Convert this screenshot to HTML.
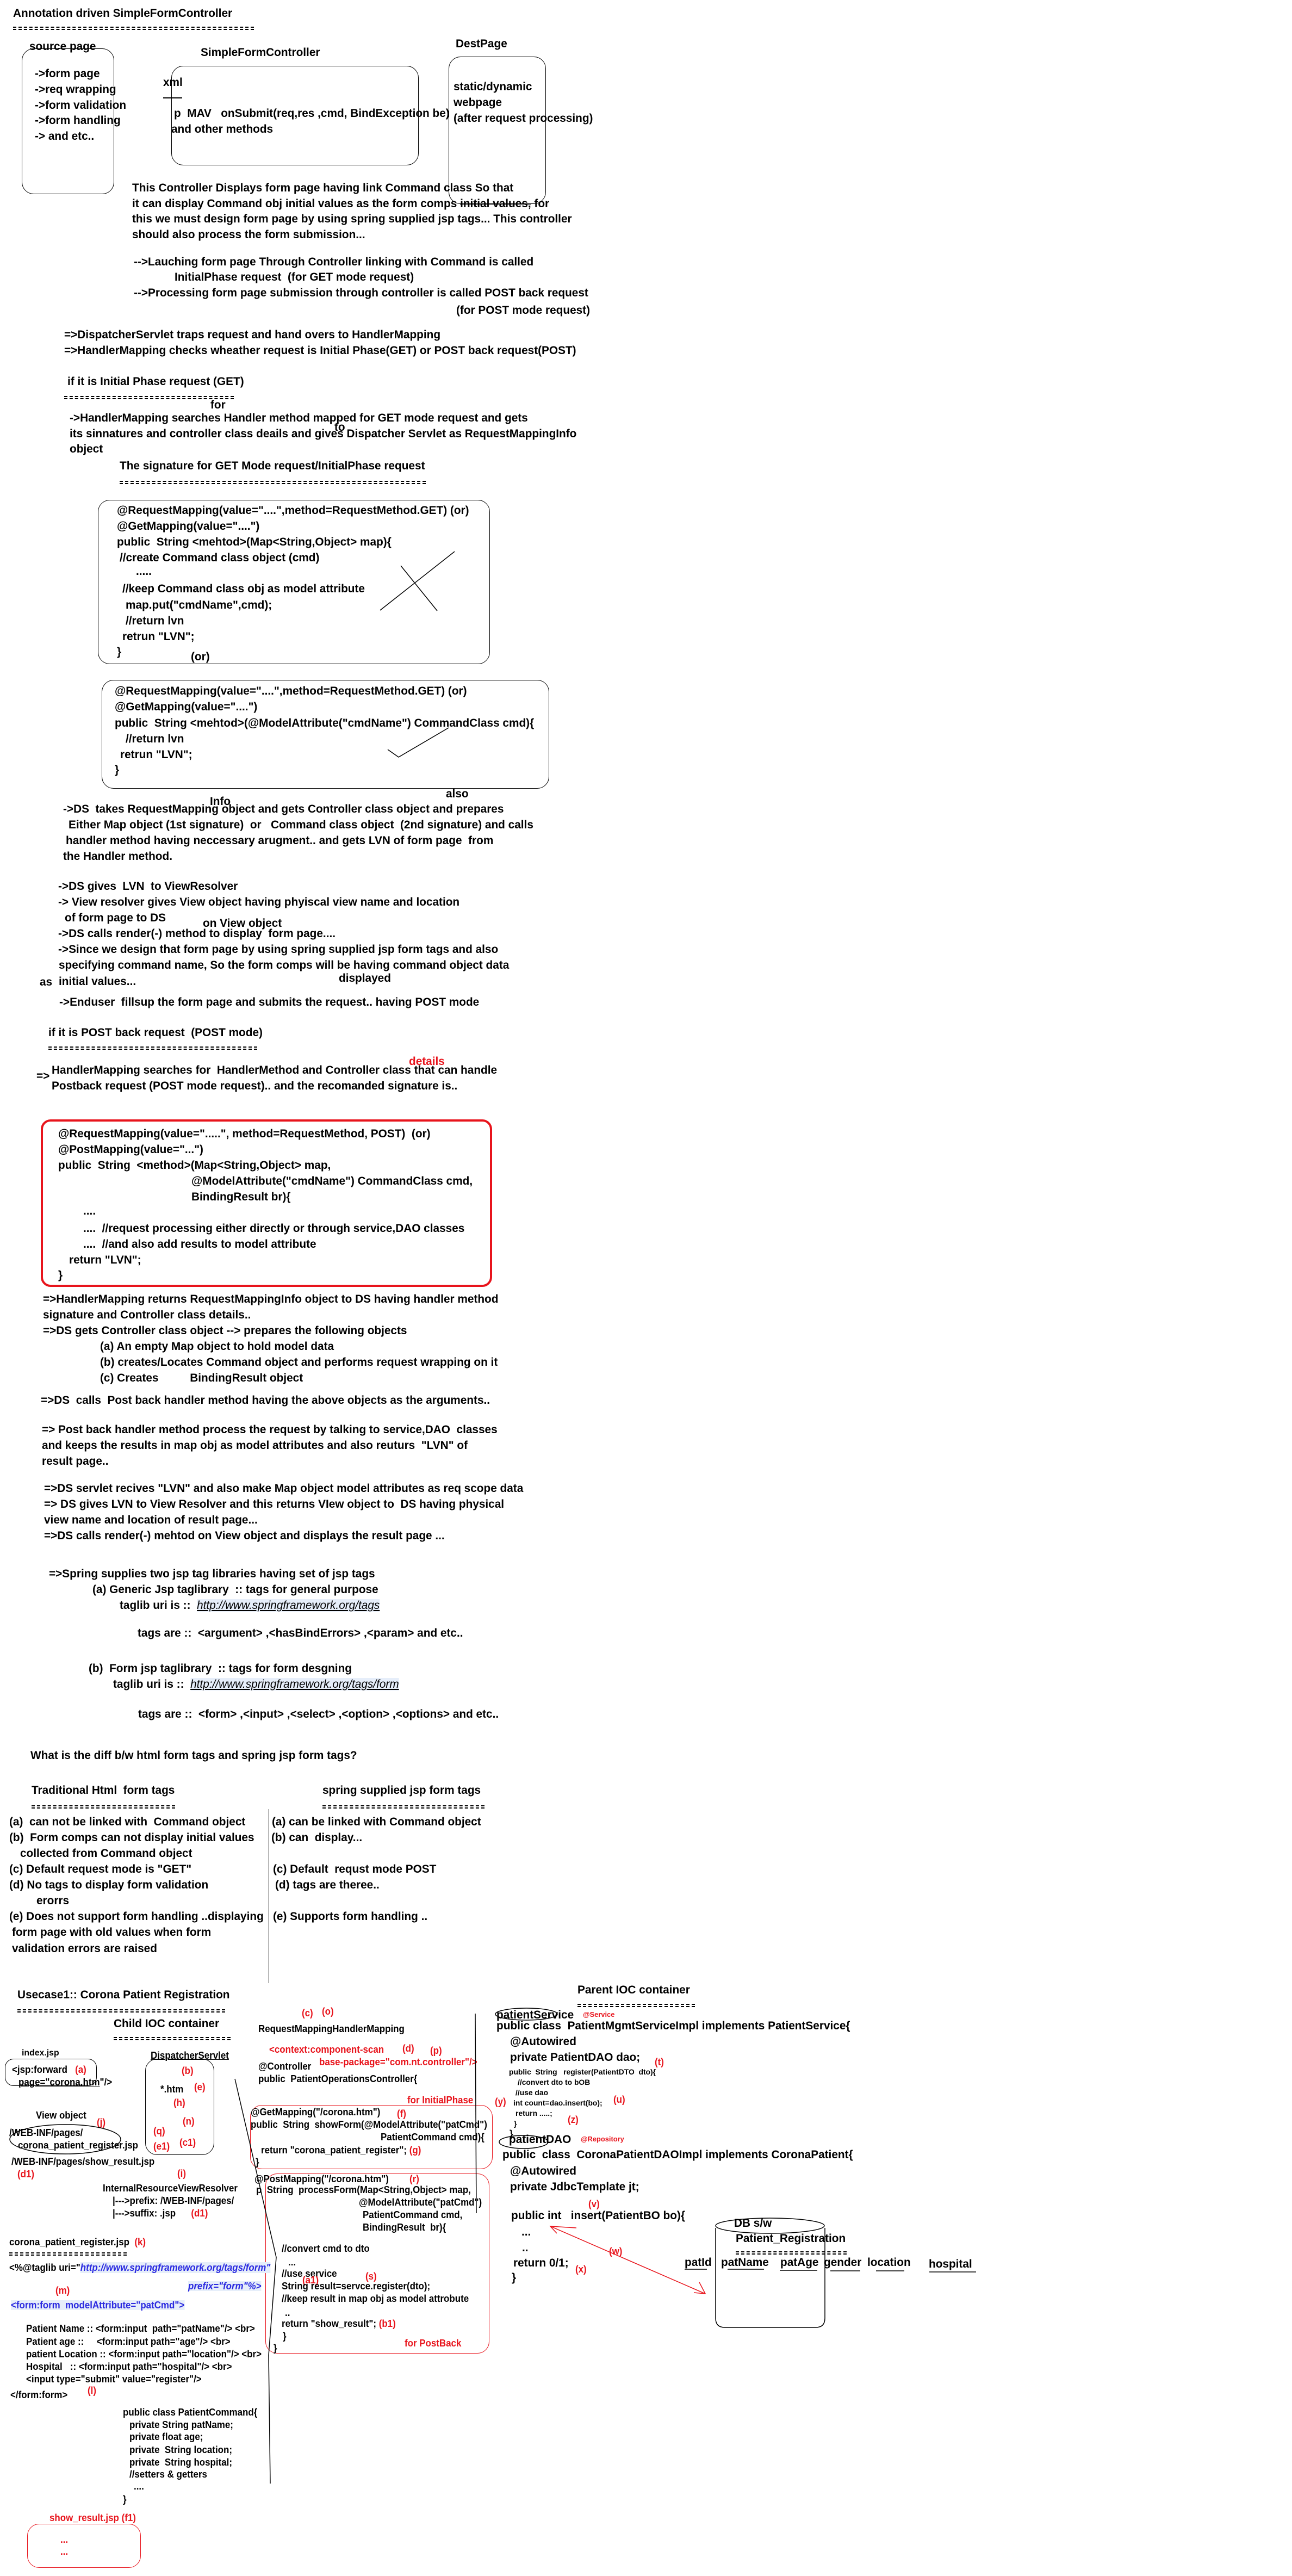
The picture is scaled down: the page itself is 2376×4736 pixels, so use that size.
<!DOCTYPE html>
<html><head><meta charset="utf-8"><style>
html,body{margin:0;padding:0;background:#fff}
body{width:2376px;height:4736px;position:relative;overflow:hidden}
.t{position:absolute;white-space:pre;font-family:"Liberation Sans",sans-serif;font-weight:bold;font-size:21px;line-height:1;color:#000;transform:scaleX(.99);transform-origin:0 0}
.s{font-size:18px;transform:scaleX(.94)}
.r{color:#e8141c}
.eq{position:absolute;height:2px;border-top:2px dashed #000;border-bottom:2px dashed #000}
.bx{position:absolute;border:1.5px solid #000;border-radius:22px}
.rb{position:absolute;border:1.5px solid #e8141c;border-radius:22px}
.lk{font-style:italic;text-decoration:underline;font-weight:normal;background:#e6eefa}
.bl{color:#2a2ae0;font-style:italic;background:#e6eefa}
</style></head><body>

<!-- TOP -->
<div class="t" style="left:24px;top:14px">Annotation driven SimpleFormController</div>
<div class="eq" style="left:24px;top:49px;width:443px"></div>
<div class="t" style="left:54px;top:75px">source page</div>
<div class="bx" style="left:40px;top:89px;width:168px;height:266px"></div>
<div class="t" style="left:64px;top:125px">-&gt;form page</div>
<div class="t" style="left:64px;top:154px">-&gt;req wrapping</div>
<div class="t" style="left:64px;top:183px">-&gt;form validation</div>
<div class="t" style="left:64px;top:211px">-&gt;form handling</div>
<div class="t" style="left:64px;top:240px">-&gt; and etc..</div>
<div class="t" style="left:369px;top:86px">SimpleFormController</div>
<div class="bx" style="left:315px;top:121px;width:453px;height:181px"></div>
<div class="t" style="left:300px;top:141px">xml</div>
<div style="position:absolute;left:300px;top:179px;width:35px;border-top:2px solid #000"></div>
<div class="t" style="left:320px;top:198px">p  MAV   onSubmit(req,res ,cmd, BindException be)</div>
<div class="t" style="left:315px;top:227px">and other methods</div>
<div class="t" style="left:838px;top:70px">DestPage</div>
<div class="bx" style="left:825px;top:104px;width:177px;height:269px"></div>
<div class="t" style="left:834px;top:149px">static/dynamic</div>
<div class="t" style="left:834px;top:178px">webpage</div>
<div class="t" style="left:834px;top:207px">(after request processing)</div>
<div class="t" style="left:243px;top:335px">This Controller Displays form page having link Command class So that</div>
<div class="t" style="left:243px;top:364px">it can display Command obj initial values as the form comps <s>initial values,</s> for</div>
<div class="t" style="left:243px;top:392px">this we must design form page by using spring supplied jsp tags... This controller</div>
<div class="t" style="left:243px;top:421px">should also process the form submission...</div>
<div class="t" style="left:246px;top:471px">--&gt;Lauching form page Through Controller linking with Command is called</div>
<div class="t" style="left:321px;top:499px">InitialPhase request  (for GET mode request)</div>
<div class="t" style="left:246px;top:528px">--&gt;Processing form page submission through controller is called POST back request</div>
<div class="t" style="left:839px;top:560px">(for POST mode request)</div>

<div class="t" style="left:118px;top:605px">=&gt;DispatcherServlet traps request and hand overs to HandlerMapping</div>
<div class="t" style="left:118px;top:634px">=&gt;HandlerMapping checks wheather request is Initial Phase(GET) or POST back request(POST)</div>
<div class="t" style="left:124px;top:691px">if it is Initial Phase request (GET)</div>
<div class="eq" style="left:118px;top:728px;width:312px"></div>
<div class="t" style="left:387px;top:734px">for</div>
<div class="t" style="left:128px;top:758px">-&gt;HandlerMapping searches Handler method mapped for GET mode request and gets</div>
<div class="t" style="left:615px;top:775px">to</div>
<div class="t" style="left:128px;top:787px">its sinnatures and controller class deails and gives Dispatcher Servlet as RequestMappingInfo</div>
<div class="t" style="left:128px;top:815px">object</div>
<div class="t" style="left:220px;top:846px">The signature for GET Mode request/InitialPhase request</div>
<div class="eq" style="left:220px;top:884px;width:563px"></div>

<div class="bx" style="left:180px;top:919px;width:719px;height:300px"></div>
<div class="t" style="left:215px;top:928px">@RequestMapping(value="....",method=RequestMethod.GET) (or)</div>
<div class="t" style="left:215px;top:957px">@GetMapping(value="....")</div>
<div class="t" style="left:215px;top:986px">public  String &lt;mehtod&gt;(Map&lt;String,Object&gt; map){</div>
<div class="t" style="left:220px;top:1015px">//create Command class object (cmd)</div>
<div class="t" style="left:250px;top:1040px">.....</div>
<div class="t" style="left:225px;top:1072px">//keep Command class obj as model attribute</div>
<div class="t" style="left:231px;top:1102px">map.put("cmdName",cmd);</div>
<div class="t" style="left:231px;top:1131px">//return lvn</div>
<div class="t" style="left:225px;top:1160px">retrun "LVN";</div>
<div class="t" style="left:215px;top:1188px">}</div>
<div class="t" style="left:351px;top:1197px">(or)</div>

<div class="bx" style="left:187px;top:1250px;width:821px;height:198px"></div>
<div class="t" style="left:211px;top:1260px">@RequestMapping(value="....",method=RequestMethod.GET) (or)</div>
<div class="t" style="left:211px;top:1289px">@GetMapping(value="....")</div>
<div class="t" style="left:211px;top:1319px">public  String &lt;mehtod&gt;(@ModelAttribute("cmdName") CommandClass cmd){</div>
<div class="t" style="left:231px;top:1348px">//return lvn</div>
<div class="t" style="left:221px;top:1377px">retrun "LVN";</div>
<div class="t" style="left:211px;top:1405px">}</div>
<div class="t" style="left:820px;top:1449px">also</div>
<div class="t" style="left:386px;top:1463px">Info</div>
<div class="t" style="left:116px;top:1477px">-&gt;DS  takes RequestMapping object and gets Controller class object and prepares</div>
<div class="t" style="left:126px;top:1506px">Either Map object (1st signature)  or   Command class object  (2nd signature) and calls</div>
<div class="t" style="left:121px;top:1535px">handler method having neccessary arugment.. and gets LVN of form page  from</div>
<div class="t" style="left:116px;top:1564px">the Handler method.</div>
<div class="t" style="left:107px;top:1619px">-&gt;DS gives  LVN  to ViewResolver</div>
<div class="t" style="left:107px;top:1648px">-&gt; View resolver gives View object having phyiscal view name and location</div>
<div class="t" style="left:119px;top:1677px">of form page to DS</div>
<div class="t" style="left:373px;top:1687px">on View object</div>
<div class="t" style="left:107px;top:1706px">-&gt;DS calls render(-) method to display  form page....</div>
<div class="t" style="left:107px;top:1735px">-&gt;Since we design that form page by using spring supplied jsp form tags and also</div>
<div class="t" style="left:108px;top:1764px">specifying command name, So the form comps will be having command object data</div>
<div class="t" style="left:623px;top:1788px">displayed</div>
<div class="t" style="left:73px;top:1795px">as</div>
<div class="t" style="left:108px;top:1794px">initial values...</div>
<div class="t" style="left:109px;top:1832px">-&gt;Enduser  fillsup the form page and submits the request.. having POST mode</div>
<div class="t" style="left:89px;top:1888px">if it is POST back request  (POST mode)</div>
<div class="eq" style="left:89px;top:1924px;width:384px"></div>
<div class="t r" style="left:752px;top:1941px">details</div>
<div class="t" style="left:67px;top:1968px">=&gt;</div>
<div class="t" style="left:95px;top:1957px">HandlerMapping searches for  HandlerMethod and Controller class that can handle</div>
<div class="t" style="left:95px;top:1986px">Postback request (POST mode request).. and the recomanded signature is..</div>

<div style="position:absolute;left:75px;top:2058px;width:822px;height:300px;border:4px solid #e8141c;border-radius:18px"></div>
<div class="t" style="left:107px;top:2074px">@RequestMapping(value=".....", method=RequestMethod, POST)  (or)</div>
<div class="t" style="left:107px;top:2103px">@PostMapping(value="...")</div>
<div class="t" style="left:107px;top:2132px">public  String  &lt;method&gt;(Map&lt;String,Object&gt; map,</div>
<div class="t" style="left:352px;top:2161px">@ModelAttribute("cmdName") CommandClass cmd,</div>
<div class="t" style="left:352px;top:2190px">BindingResult br){</div>
<div class="t" style="left:153px;top:2216px">....</div>
<div class="t" style="left:153px;top:2248px">....  //request processing either directly or through service,DAO classes</div>
<div class="t" style="left:153px;top:2277px">....  //and also add results to model attribute</div>
<div class="t" style="left:127px;top:2306px">return "LVN";</div>
<div class="t" style="left:107px;top:2334px">}</div>
<div class="t" style="left:79px;top:2378px">=&gt;HandlerMapping returns RequestMappingInfo object to DS having handler method</div>
<div class="t" style="left:79px;top:2407px">signature and Controller class details..</div>
<div class="t" style="left:79px;top:2436px">=&gt;DS gets Controller class object --&gt; prepares the following objects</div>
<div class="t" style="left:184px;top:2465px">(a) An empty Map object to hold model data</div>
<div class="t" style="left:184px;top:2494px">(b) creates/Locates Command object and performs request wrapping on it</div>
<div class="t" style="left:184px;top:2523px">(c) Creates          BindingResult object</div>
<div class="t" style="left:75px;top:2564px">=&gt;DS  calls  Post back handler method having the above objects as the arguments..</div>
<div class="t" style="left:77px;top:2618px">=&gt; Post back handler method process the request by talking to service,DAO  classes</div>
<div class="t" style="left:77px;top:2647px">and keeps the results in map obj as model attributes and also reuturs  "LVN" of</div>
<div class="t" style="left:77px;top:2676px">result page..</div>
<div class="t" style="left:81px;top:2726px">=&gt;DS servlet recives "LVN" and also make Map object model attributes as req scope data</div>
<div class="t" style="left:81px;top:2755px">=&gt; DS gives LVN to View Resolver and this returns VIew object to  DS having physical</div>
<div class="t" style="left:81px;top:2784px">view name and location of result page...</div>
<div class="t" style="left:81px;top:2813px">=&gt;DS calls render(-) mehtod on View object and displays the result page ...</div>
<div class="t" style="left:90px;top:2883px">=&gt;Spring supplies two jsp tag libraries having set of jsp tags</div>
<div class="t" style="left:170px;top:2912px">(a) Generic Jsp taglibrary  :: tags for general purpose</div>
<div class="t" style="left:220px;top:2941px">taglib uri is ::  <span class="lk">http://www.springframework.org/tags</span></div>
<div class="t" style="left:253px;top:2992px">tags are ::  &lt;argument&gt; ,&lt;hasBindErrors&gt; ,&lt;param&gt; and etc..</div>
<div class="t" style="left:163px;top:3057px">(b)  Form jsp taglibrary  :: tags for form desgning</div>
<div class="t" style="left:208px;top:3086px">taglib uri is ::  <span class="lk">http://www.springframework.org/tags/form</span></div>
<div class="t" style="left:254px;top:3141px">tags are ::  &lt;form&gt; ,&lt;input&gt; ,&lt;select&gt; ,&lt;option&gt; ,&lt;options&gt; and etc..</div>
<div class="t" style="left:56px;top:3217px">What is the diff b/w html form tags and spring jsp form tags?</div>
<div class="t" style="left:58px;top:3281px">Traditional Html  form tags</div>
<div class="t" style="left:593px;top:3281px">spring supplied jsp form tags</div>
<div class="eq" style="left:58px;top:3319px;width:264px"></div>
<div class="eq" style="left:593px;top:3319px;width:298px"></div>
<div style="position:absolute;left:494px;top:3326px;width:0;height:320px;border-left:1.5px solid #000"></div>
<div class="t" style="left:17px;top:3339px">(a)  can not be linked with  Command object</div>
<div class="t" style="left:17px;top:3368px">(b)  Form comps can not display initial values</div>
<div class="t" style="left:37px;top:3397px">collected from Command object</div>
<div class="t" style="left:17px;top:3426px">(c) Default request mode is "GET"</div>
<div class="t" style="left:17px;top:3455px">(d) No tags to display form validation</div>
<div class="t" style="left:67px;top:3484px">erorrs</div>
<div class="t" style="left:17px;top:3513px">(e) Does not support form handling ..displaying</div>
<div class="t" style="left:22px;top:3542px">form page with old values when form</div>
<div class="t" style="left:22px;top:3572px">validation errors are raised</div>
<div class="t" style="left:500px;top:3339px">(a) can be linked with Command object</div>
<div class="t" style="left:499px;top:3368px">(b) can  display...</div>
<div class="t" style="left:502px;top:3426px">(c) Default  requst mode POST</div>
<div class="t" style="left:506px;top:3455px">(d) tags are theree..</div>
<div class="t" style="left:502px;top:3513px">(e) Supports form handling ..</div>

<!-- BOTTOM -->
<div class="t" style="left:32px;top:3657px">Usecase1:: Corona Patient Registration</div>
<div class="eq" style="left:32px;top:3694px;width:382px"></div>
<div class="t" style="left:209px;top:3710px">Child IOC container</div>
<div class="eq" style="left:209px;top:3745px;width:215px"></div>
<div class="t s r" style="left:555px;top:3692px">(c)</div>
<div class="t s r" style="left:592px;top:3689px">(o)</div>
<div class="t s" style="left:475px;top:3721px">RequestMappingHandlerMapping</div>
<div class="t s r" style="left:495px;top:3759px">&lt;context:component-scan</div>
<div class="t s r" style="left:740px;top:3757px">(d)</div>
<div class="t s r" style="left:791px;top:3761px">(p)</div>
<div class="t s" style="left:475px;top:3790px">@Controller</div>
<div class="t s r" style="left:587px;top:3782px">base-package="com.nt.controller"/&gt;</div>
<div class="t s" style="left:475px;top:3813px">public  PatientOperationsController{</div>
<div class="t s r" style="left:749px;top:3852px">for InitialPhase</div>
<div class="rb" style="left:460px;top:3870px;width:444px;height:116px"></div>
<div class="t s" style="left:461px;top:3874px">@GetMapping("/corona.htm")</div>
<div class="t s r" style="left:730px;top:3877px">(f)</div>
<div class="t s" style="left:461px;top:3897px">public  String  showForm(@ModelAttribute("patCmd")</div>
<div class="t s" style="left:700px;top:3920px">PatientCommand cmd){</div>
<div class="t s" style="left:480px;top:3944px">return "corona_patient_register"; <span class="r">(g)</span></div>
<div class="t s" style="left:470px;top:3966px">}</div>
<div class="rb" style="left:488px;top:3996px;width:410px;height:329px"></div>
<div class="t s" style="left:468px;top:3997px">@PostMapping("/corona.htm")</div>
<div class="t s r" style="left:753px;top:3997px">(r)</div>
<div class="t s" style="left:471px;top:4017px">p  String  processForm(Map&lt;String,Object&gt; map,</div>
<div class="t s" style="left:660px;top:4040px">@ModelAttribute("patCmd")</div>
<div class="t s" style="left:667px;top:4063px">PatientCommand cmd,</div>
<div class="t s" style="left:667px;top:4086px">BindingResult  br){</div>
<div class="t s" style="left:518px;top:4125px">//convert cmd to dto</div>
<div class="t s" style="left:530px;top:4150px">...</div>
<div class="t s" style="left:518px;top:4171px">//use service</div>
<div class="t s r" style="left:556px;top:4183px">(a1)</div>
<div class="t s r" style="left:672px;top:4176px">(s)</div>
<div class="t s" style="left:518px;top:4194px">String result=servce.register(dto);</div>
<div class="t s" style="left:518px;top:4217px">//keep result in map obj as model attrobute</div>
<div class="t s" style="left:524px;top:4243px">..</div>
<div class="t s" style="left:518px;top:4263px">return "show_result"; <span class="r">(b1)</span></div>
<div class="t s" style="left:520px;top:4286px">}</div>
<div class="t s r" style="left:744px;top:4299px">for PostBack</div>
<div class="t s" style="left:503px;top:4308px">}</div>

<div class="t" style="left:40px;top:3767px;font-size:16px">index.jsp</div>
<div class="bx" style="left:9px;top:3785px;width:167px;height:48px;border-radius:16px"></div>
<div class="t s" style="left:22px;top:3796px">&lt;jsp:forward   <span class="r">(a)</span></div>
<div class="t s" style="left:34px;top:3819px"><u>page="corona.htm</u>"/&gt;</div>
<div class="t s" style="left:277px;top:3770px"><u>DispatcherServlet</u></div>
<div class="bx" style="left:267px;top:3785px;width:125px;height:175px"></div>
<div class="t s r" style="left:334px;top:3798px">(b)</div>
<div class="t s" style="left:295px;top:3832px">*.htm</div>
<div class="t s r" style="left:357px;top:3828px">(e)</div>
<div class="t s r" style="left:319px;top:3857px">(h)</div>
<div class="t s r" style="left:336px;top:3891px">(n)</div>
<div class="t s r" style="left:282px;top:3909px">(q)</div>
<div class="t s r" style="left:282px;top:3937px">(e1)</div>
<div class="t s r" style="left:330px;top:3930px">(c1)</div>
<div class="t s" style="left:66px;top:3880px">View object</div>
<div class="t s r" style="left:178px;top:3893px">(j)</div>
<div class="t s" style="left:17px;top:3912px">/WEB-INF/pages/</div>
<div class="t s" style="left:33px;top:3935px">corona_patient_register.jsp</div>
<div class="t s" style="left:21px;top:3965px">/WEB-INF/pages/show_result.jsp</div>
<div class="t s r" style="left:32px;top:3988px">(d1)</div>
<div class="t s r" style="left:326px;top:3987px">(i)</div>
<div class="t s" style="left:189px;top:4014px">InternalResourceViewResolver</div>
<div class="t s" style="left:207px;top:4037px">|---&gt;prefix: /WEB-INF/pages/</div>
<div class="t s" style="left:207px;top:4060px">|---&gt;suffix: .jsp      <span class="r">(d1)</span></div>
<div class="t s" style="left:17px;top:4113px">corona_patient_register.jsp  <span class="r">(k)</span></div>
<div class="eq" style="left:17px;top:4141px;width:216px"></div>
<div class="t s" style="left:17px;top:4160px">&lt;%@taglib uri="<span class="bl">http://www.springframework.org/tags/form"</span></div>
<div class="t s bl" style="left:346px;top:4194px">prefix="form"%&gt;</div>
<div class="t s r" style="left:102px;top:4202px">(m)</div>
<div class="t s bl" style="left:20px;top:4229px;font-style:normal">&lt;form:form  modelAttribute="patCmd"&gt;</div>
<div class="t s" style="left:48px;top:4272px">Patient Name :: &lt;form:input  path="patName"/&gt; &lt;br&gt;</div>
<div class="t s" style="left:48px;top:4296px">Patient age ::     &lt;form:input path="age"/&gt; &lt;br&gt;</div>
<div class="t s" style="left:48px;top:4319px">patient Location :: &lt;form:input path="location"/&gt; &lt;br&gt;</div>
<div class="t s" style="left:48px;top:4342px">Hospital   :: &lt;form:input path="hospital"/&gt; &lt;br&gt;</div>
<div class="t s" style="left:48px;top:4365px">&lt;input type="submit" value="register"/&gt;</div>
<div class="t s" style="left:19px;top:4394px">&lt;/form:form&gt;</div>
<div class="t s r" style="left:161px;top:4386px">(l)</div>
<div class="t s" style="left:226px;top:4426px">public class PatientCommand{</div>
<div class="t s" style="left:238px;top:4449px">private String patName;</div>
<div class="t s" style="left:238px;top:4471px">private float age;</div>
<div class="t s" style="left:238px;top:4495px">private  String location;</div>
<div class="t s" style="left:238px;top:4518px">private  String hospital;</div>
<div class="t s" style="left:238px;top:4540px">//setters &amp; getters</div>
<div class="t s" style="left:246px;top:4562px">....</div>
<div class="t s" style="left:226px;top:4586px">}</div>
<div class="t s r" style="left:91px;top:4620px">show_result.jsp (f1)</div>
<div class="rb" style="left:50px;top:4640px;width:207px;height:79px"></div>
<div class="t s r" style="left:111px;top:4660px">...</div>
<div class="t s r" style="left:111px;top:4682px">...</div>

<!-- parent -->
<div class="t" style="left:1062px;top:3648px">Parent IOC container</div>
<div class="eq" style="left:1062px;top:3684px;width:216px"></div>
<div class="t" style="left:913px;top:3694px">patientService</div>
<div class="t r" style="left:1072px;top:3697px;font-size:13px">@Service</div>
<div class="t" style="left:913px;top:3714px">public class  PatientMgmtServiceImpl implements PatientService{</div>
<div class="t" style="left:938px;top:3743px">@Autowired</div>
<div class="t" style="left:938px;top:3772px">private PatientDAO dao;</div>
<div class="t s r" style="left:1204px;top:3782px">(t)</div>
<div class="t" style="left:936px;top:3802px;font-size:14px">public  String   register(PatientDTO  dto){</div>
<div class="t" style="left:952px;top:3821px;font-size:14px">//convert dto to bOB</div>
<div class="t" style="left:948px;top:3840px;font-size:14px">//use dao</div>
<div class="t s r" style="left:910px;top:3855px">(y)</div>
<div class="t" style="left:944px;top:3859px;font-size:14px">int count=dao.insert(bo);</div>
<div class="t s r" style="left:1128px;top:3851px">(u)</div>
<div class="t" style="left:948px;top:3878px;font-size:14px">return .....;</div>
<div class="t s r" style="left:1044px;top:3888px">(z)</div>
<div class="t" style="left:945px;top:3897px;font-size:14px">}</div>
<div class="t s" style="left:937px;top:3914px">}</div>
<div class="t" style="left:936px;top:3923px">patientDAO</div>
<div class="t r" style="left:1068px;top:3926px;font-size:13px">@Repository</div>
<div class="t" style="left:924px;top:3951px">public  class  CoronaPatientDAOImpl implements CoronaPatient{</div>
<div class="t" style="left:938px;top:3981px">@Autowired</div>
<div class="t" style="left:938px;top:4010px">private JdbcTemplate jt;</div>
<div class="t s r" style="left:1082px;top:4043px">(v)</div>
<div class="t" style="left:940px;top:4063px">public int   insert(PatientBO bo){</div>
<div class="t" style="left:959px;top:4093px">...</div>
<div class="t" style="left:960px;top:4122px">..</div>
<div class="t" style="left:944px;top:4150px">return 0/1;</div>
<div class="t s r" style="left:1058px;top:4163px">(x)</div>
<div class="t" style="left:941px;top:4177px">}</div>
<div class="t s r" style="left:1120px;top:4130px">(w)</div>
<div class="t" style="left:1350px;top:4077px">DB s/w</div>
<div class="t" style="left:1353px;top:4105px">Patient_Registration</div>
<div class="eq" style="left:1353px;top:4139px;width:204px"></div>
<div class="t" style="left:1259px;top:4149px">patId</div>
<div class="t" style="left:1326px;top:4149px">patName</div>
<div class="t" style="left:1435px;top:4149px">patAge</div>
<div class="t" style="left:1515px;top:4149px">gender</div>
<div class="t" style="left:1595px;top:4149px">location</div>
<div class="t" style="left:1708px;top:4152px">hospital</div>

<svg style="position:absolute;left:0;top:0" width="2376" height="4736" fill="none" stroke="#000" stroke-width="1.5">
<line x1="737" y1="1040" x2="804" y2="1123"/>
<line x1="836" y1="1014" x2="699" y2="1122"/>
<polyline points="713,1378 733,1392 825,1338"/>
<line x1="874" y1="3702" x2="876" y2="4069"/>
<polyline points="432,3822 508,4150 494,4330 497,4566"/>
<ellipse cx="120" cy="3933" rx="102" ry="27"/>
<ellipse cx="968" cy="3703" rx="57" ry="11"/>
<ellipse cx="963" cy="3938" rx="45" ry="12"/>
<ellipse cx="1416" cy="4092" rx="100" ry="14"/>
<path d="M1316 4096 V4262 Q1316 4279 1333 4279 H1500 Q1517 4279 1517 4262 V4096"/>
<line x1="1259" y1="4172" x2="1300" y2="4172"/>
<line x1="1338" y1="4172" x2="1405" y2="4172"/>
<line x1="1434" y1="4174" x2="1503" y2="4174"/>
<line x1="1527" y1="4175" x2="1582" y2="4175"/>
<line x1="1611" y1="4175" x2="1663" y2="4175"/>
<line x1="1709" y1="4177" x2="1795" y2="4177"/>
<g stroke="#e8141c">
<line x1="1012" y1="4093" x2="1297" y2="4217"/>
<polyline points="1060,4096 1012,4093 1024,4106"/>
<polyline points="1286,4196 1297,4217 1276,4215"/>
</g>
</svg>
</body></html>
